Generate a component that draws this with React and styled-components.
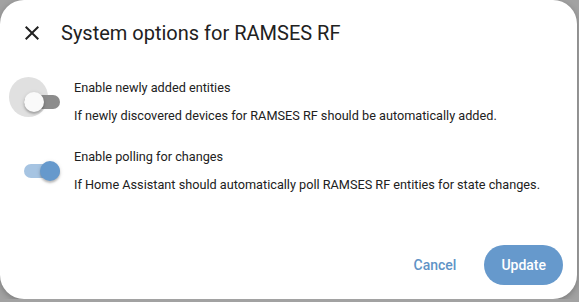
import React from 'react';
import styled, { createGlobalStyle } from 'styled-components';

const GlobalStyle = createGlobalStyle`
  html, body {
    margin: 0;
    padding: 0;
    background: #a2a2a2;
    font-family: Roboto, "Noto Sans", sans-serif;
  }
`;

const Dialog = styled.div`
  width: 577px;
  height: 299px;
  box-sizing: border-box;
  background: #ffffff;
  border-radius: 24px;
  box-shadow: 0 2px 6px rgba(0, 0, 0, 0.25);
  display: flex;
  flex-direction: column;
  color: #212121;
`;

const Header = styled.div`
  display: flex;
  align-items: center;
  height: 44px;
  padding: 11px 16px 0 20px;
  gap: 17px;
`;

const CloseButton = styled.button`
  width: 24px;
  height: 24px;
  padding: 0;
  border: 0;
  background: none;
  display: flex;
  align-items: center;
  justify-content: center;
  color: #212121;
`;

const Title = styled.h2`
  margin: 0;
  font-size: 20px;
  font-weight: 400;
  letter-spacing: 0;
`;

const Body = styled.div`
  display: flex;
  flex-direction: column;
  gap: 21px;
  padding: 23px 24px 0 24px;
`;

const Row = styled.div`
  display: flex;
  align-items: center;
  gap: 14px;
`;

const SwitchBox = styled.div`
  position: relative;
  width: 36px;
  height: 20px;
  flex: none;
`;

const Track = styled.div`
  position: absolute;
  left: 0;
  top: 3px;
  width: 36px;
  height: 14px;
  border-radius: 7px;
  background: ${p => (p.$on ? '#a6c4e2' : '#8c8c8c')};
`;

const Thumb = styled.div`
  position: absolute;
  top: 0;
  left: ${p => (p.$on ? '16px' : '0')};
  width: 20px;
  height: 20px;
  border-radius: 50%;
  background: ${p => (p.$on ? '#6699cc' : '#fafafa')};
  box-shadow: 0 2px 2px rgba(0, 0, 0, 0.2), 0 1px 4px rgba(0, 0, 0, 0.14);
`;

const Ripple = styled.div`
  position: absolute;
  left: -15px;
  top: -15px;
  width: 39px;
  height: 40px;
  border-radius: 50%;
  background: #e0e0e0;
`;

const Text = styled.div`
  display: flex;
  flex-direction: column;
  gap: 8px;
  font-size: 12.7px;
  line-height: 20px;
`;

const Label = styled.div`
  color: #212121;
`;

const Description = styled.div`
  color: #212121;
`;

const Actions = styled.div`
  margin-top: auto;
  display: flex;
  justify-content: flex-end;
  align-items: center;
  gap: 16px;
  padding: 0 14px 14px 0;
`;

const Button = styled.button`
  height: 40px;
  border: 0;
  border-radius: 20px;
  padding: 0 ${p => (p.$filled ? '17px' : '12px')};
  font-family: Roboto, "Noto Sans", sans-serif;
  font-size: 14px;
  font-weight: 500;
  background: ${p => (p.$filled ? '#6699cc' : 'transparent')};
  color: ${p => (p.$filled ? '#ffffff' : '#5f93c6')};
`;

function Switch({ on, ripple }) {
  return (
    <SwitchBox>
      {ripple && <Ripple />}
      <Track $on={on} />
      <Thumb $on={on} />
    </SwitchBox>
  );
}

const options = [
  {
    label: 'Enable newly added entities',
    description: 'If newly discovered devices for RAMSES RF should be automatically added.',
    on: false,
    ripple: true,
  },
  {
    label: 'Enable polling for changes',
    description: 'If Home Assistant should automatically poll RAMSES RF entities for state changes.',
    on: true,
  },
];

export default function App() {
  return (
    <>
      <GlobalStyle />
      <Dialog>
        <Header>
          <CloseButton aria-label="Close">
            <svg width="24" height="24" viewBox="0 0 24 24">
              <path
                fill="currentColor"
                d="M19,6.41L17.59,5L12,10.59L6.41,5L5,6.41L10.59,12L5,17.59L6.41,19L12,13.41L17.59,19L19,17.59L13.41,12L19,6.41Z"
              />
            </svg>
          </CloseButton>
          <Title>System options for RAMSES RF</Title>
        </Header>
        <Body>
          {options.map(x => (
            <Row key={x.label}>
              <Switch on={x.on} ripple={x.ripple} />
              <Text>
                <Label>{x.label}</Label>
                <Description>{x.description}</Description>
              </Text>
            </Row>
          ))}
        </Body>
        <Actions>
          <Button>Cancel</Button>
          <Button $filled>Update</Button>
        </Actions>
      </Dialog>
    </>
  );
}
